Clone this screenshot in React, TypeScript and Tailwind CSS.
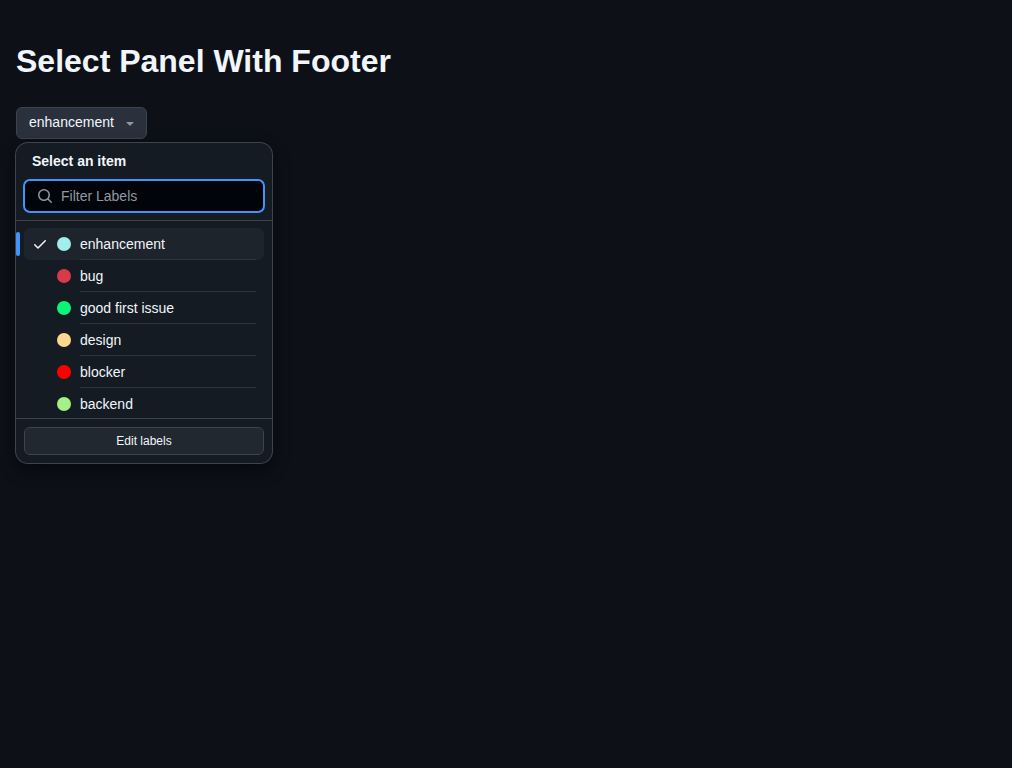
const labels = [
  { name: 'enhancement', dot: 'bg-[#a2eeef]', selected: true },
  { name: 'bug', dot: 'bg-[#d73a4a]', selected: false },
  { name: 'good first issue', dot: 'bg-[#0cf478]', selected: false },
  { name: 'design', dot: 'bg-[#ffd78e]', selected: false },
  { name: 'blocker', dot: 'bg-[#ff0000]', selected: false },
  { name: 'backend', dot: 'bg-[#a4f287]', selected: false },
];

function Icon({ d, className }: { d: string; className: string }) {
  return (
    <svg viewBox="0 0 16 16" width="16" height="16" fill="currentColor" className={className} aria-hidden="true">
      <path d={d} />
    </svg>
  );
}

const SEARCH =
  'M10.68 11.74a6 6 0 0 1-7.922-8.982 6 6 0 0 1 8.982 7.922l3.04 3.04a.749.749 0 0 1-.326 1.275.749.749 0 0 1-.734-.215ZM11.5 7a4.499 4.499 0 1 0-8.997 0A4.499 4.499 0 0 0 11.5 7Z';
const CHECK =
  'M13.78 4.22a.75.75 0 0 1 0 1.06l-7.25 7.25a.75.75 0 0 1-1.06 0L2.22 9.28a.751.751 0 0 1 .018-1.042.751.751 0 0 1 1.042-.018L6 10.94l6.72-6.72a.75.75 0 0 1 1.06 0Z';
const TRIANGLE_DOWN =
  'm4.427 7.427 3.396 3.396a.25.25 0 0 0 .354 0l3.396-3.396A.25.25 0 0 0 11.396 7H4.604a.25.25 0 0 0-.177.427Z';

export default function App() {
  return (
    <main className="min-h-screen bg-[#0d1117] px-4 pt-[37px] font-['Liberation_Sans',Arial,sans-serif] text-sm text-[#f0f6fc]">
      <h1 className="text-[32px] leading-[48px] font-bold">Select Panel With Footer</h1>
      <button className="mt-[22px] flex h-8 w-[131px] items-center justify-between rounded-md border border-[#3d444d] bg-[#2a313c] pr-2 pl-3 leading-5">
        <span className="-mt-0.5">enhancement</span>
        <Icon d={TRIANGLE_DOWN} className="text-[#9198a1]" />
      </button>

      <section className="mt-1 flex h-80 w-64 flex-col overflow-hidden rounded-xl bg-[#151b23] shadow-[0_0_0_1px_#3d444d,0_6px_12px_-3px_#01040966,0_6px_18px_0_#01040966]">
        <h2 className="px-4 pt-2 text-sm leading-[21px] font-bold">Select an item</h2>
        <label className="mx-2 mt-2 flex h-8 shrink-0 items-center rounded-md bg-[#010409] px-[13px] outline-2 -outline-offset-1 outline-[#4493f8]">
          <Icon d={SEARCH} className="shrink-0 text-[#9198a1]" />
          <input
            placeholder="Filter Labels"
            className="ml-2 w-full bg-transparent leading-5 outline-none placeholder:text-[#9198a1]"
          />
        </label>
        <ul className="mt-2 min-h-0 flex-1 overflow-hidden border-t border-[#3d444d] px-2 pt-[7px]">
          {labels.map((label, i) => (
            <li
              key={label.name}
              className={
                label.selected
                  ? 'relative flex h-8 rounded-md bg-[#1e242b] pr-2 pl-2'
                  : 'flex h-8 pr-2 pl-2'
              }
            >
              {label.selected && (
                <span className="absolute top-1 -left-2 h-6 w-1 rounded-md bg-[#4493f8]" />
              )}
              <span className="flex w-4 items-center">
                {label.selected && <Icon d={CHECK} className="" />}
              </span>
              <span className="ml-2 flex w-4 items-center justify-center">
                <span className={`size-3.5 rounded-full ${label.dot}`} />
              </span>
              <span
                className={
                  i < labels.length - 1
                    ? 'ml-2 flex-1 border-b border-[#2f353d] pt-1.5 leading-5'
                    : 'ml-2 flex-1 pt-1.5 leading-5'
                }
              >
                {label.name}
              </span>
            </li>
          ))}
        </ul>
        <footer className="shrink-0 border-t border-[#3d444d] p-2">
          <button className="h-7 w-full rounded-md border border-[#3d444d] bg-[#212830] text-xs">Edit labels</button>
        </footer>
      </section>
    </main>
  );
}
